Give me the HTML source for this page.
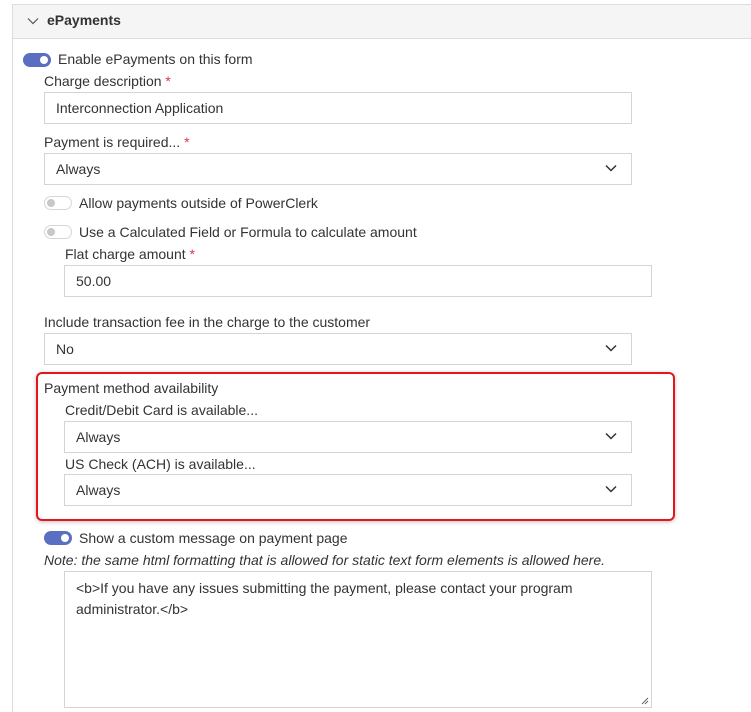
<!DOCTYPE html>
<html><head><meta charset="utf-8">
<style>
*{box-sizing:border-box;margin:0;padding:0}
html,body{width:751px;height:712px;overflow:hidden}
body{background:#fff;position:relative;font-family:"Liberation Sans",sans-serif;font-size:14px;color:#333}
.a{position:absolute;white-space:nowrap}
.panel{position:absolute;left:12px;top:4px;width:739px;height:708px;border:1px solid #ddd;border-right:none;border-bottom:none;background:#fff}
.hdr{position:absolute;left:12px;top:4px;width:739px;height:35px;border:1px solid #ddd;border-right:none;background:#f5f5f5}
.in{position:absolute;border:1px solid #d4d4d4;background:#fff;height:32px;padding-left:11px;line-height:30px}
.chev{position:absolute;right:14px;top:10px}
.req{color:#e0334c}
.tog{position:absolute;width:28px;height:14px;border-radius:7px}
.tog.on{background:#5b6fc2}
.tog.on::after{content:"";position:absolute;right:3px;top:3px;width:8px;height:8px;border-radius:50%;background:#fff}
.tog.off{background:#fff;border:1px solid #d6d6d6}
.tog.off::after{content:"";position:absolute;left:2px;top:2px;width:8px;height:8px;border-radius:50%;background:#c8c8c8}
</style></head><body>
<div class="panel"></div>
<div class="hdr"></div>
<svg class="a" style="left:27px;top:17px" width="12" height="8"><path d="M1 1.5 L6 6.5 L11 1.5" fill="none" stroke="#555" stroke-width="1.2"/></svg>
<div class="a" style="left:47px;top:12px;font-weight:bold;font-size:14px">ePayments</div>

<div class="tog on" style="left:23px;top:53px"></div>
<div class="a" style="left:58px;top:51px">Enable ePayments on this form</div>
<div class="a" style="left:44px;top:73px">Charge description <span class="req">*</span></div>
<div class="in" style="left:44px;top:92px;width:588px">Interconnection Application</div>
<div class="a" style="left:44px;top:134px">Payment is required... <span class="req">*</span></div>
<div class="in" style="left:44px;top:153px;width:588px">Always<svg class="chev" width="12" height="8"><path d="M1 1.5 L6 6.5 L11 1.5" fill="none" stroke="#333" stroke-width="1.5"/></svg></div>

<div class="tog off" style="left:44px;top:196px"></div>
<div class="a" style="left:79px;top:195px">Allow payments outside of PowerClerk</div>
<div class="tog off" style="left:44px;top:225px"></div>
<div class="a" style="left:79px;top:224px">Use a Calculated Field or Formula to calculate amount</div>
<div class="a" style="left:65px;top:246px">Flat charge amount <span class="req">*</span></div>
<div class="in" style="left:64px;top:265px;width:588px">50.00</div>

<div class="a" style="left:44px;top:314px">Include transaction fee in the charge to the customer</div>
<div class="in" style="left:44px;top:333px;width:588px">No<svg class="chev" width="12" height="8"><path d="M1 1.5 L6 6.5 L11 1.5" fill="none" stroke="#333" stroke-width="1.5"/></svg></div>

<div class="a" style="left:36px;top:372px;width:639px;height:149px;border:2px solid #e8141c;border-radius:6px;box-shadow:0 1px 4px rgba(0,0,0,.25)"></div>
<div class="a" style="left:44px;top:380px">Payment method availability</div>
<div class="a" style="left:65px;top:402px">Credit/Debit Card is available...</div>
<div class="in" style="left:64px;top:421px;width:568px">Always<svg class="chev" width="12" height="8"><path d="M1 1.5 L6 6.5 L11 1.5" fill="none" stroke="#333" stroke-width="1.5"/></svg></div>
<div class="a" style="left:65px;top:456px">US Check (ACH) is available...</div>
<div class="in" style="left:64px;top:474px;width:568px">Always<svg class="chev" width="12" height="8"><path d="M1 1.5 L6 6.5 L11 1.5" fill="none" stroke="#333" stroke-width="1.5"/></svg></div>

<div class="tog on" style="left:44px;top:531px"></div>
<div class="a" style="left:79px;top:530px">Show a custom message on payment page</div>
<div class="a" style="left:44px;top:552px;font-style:italic">Note: the same html formatting that is allowed for static text form elements is allowed here.</div>
<div class="a" style="left:64px;top:571px;width:588px;height:137px;border:1px solid #d4d4d4;padding:6px 11px;line-height:21px;white-space:normal">&lt;b&gt;If you have any issues submitting the payment, please contact your program administrator.&lt;/b&gt;
<svg style="position:absolute;right:2px;bottom:2px" width="8" height="8"><path d="M7 1 L1 7 M7 4 L4 7" stroke="#666" stroke-width="1"/></svg></div>
</body></html>
